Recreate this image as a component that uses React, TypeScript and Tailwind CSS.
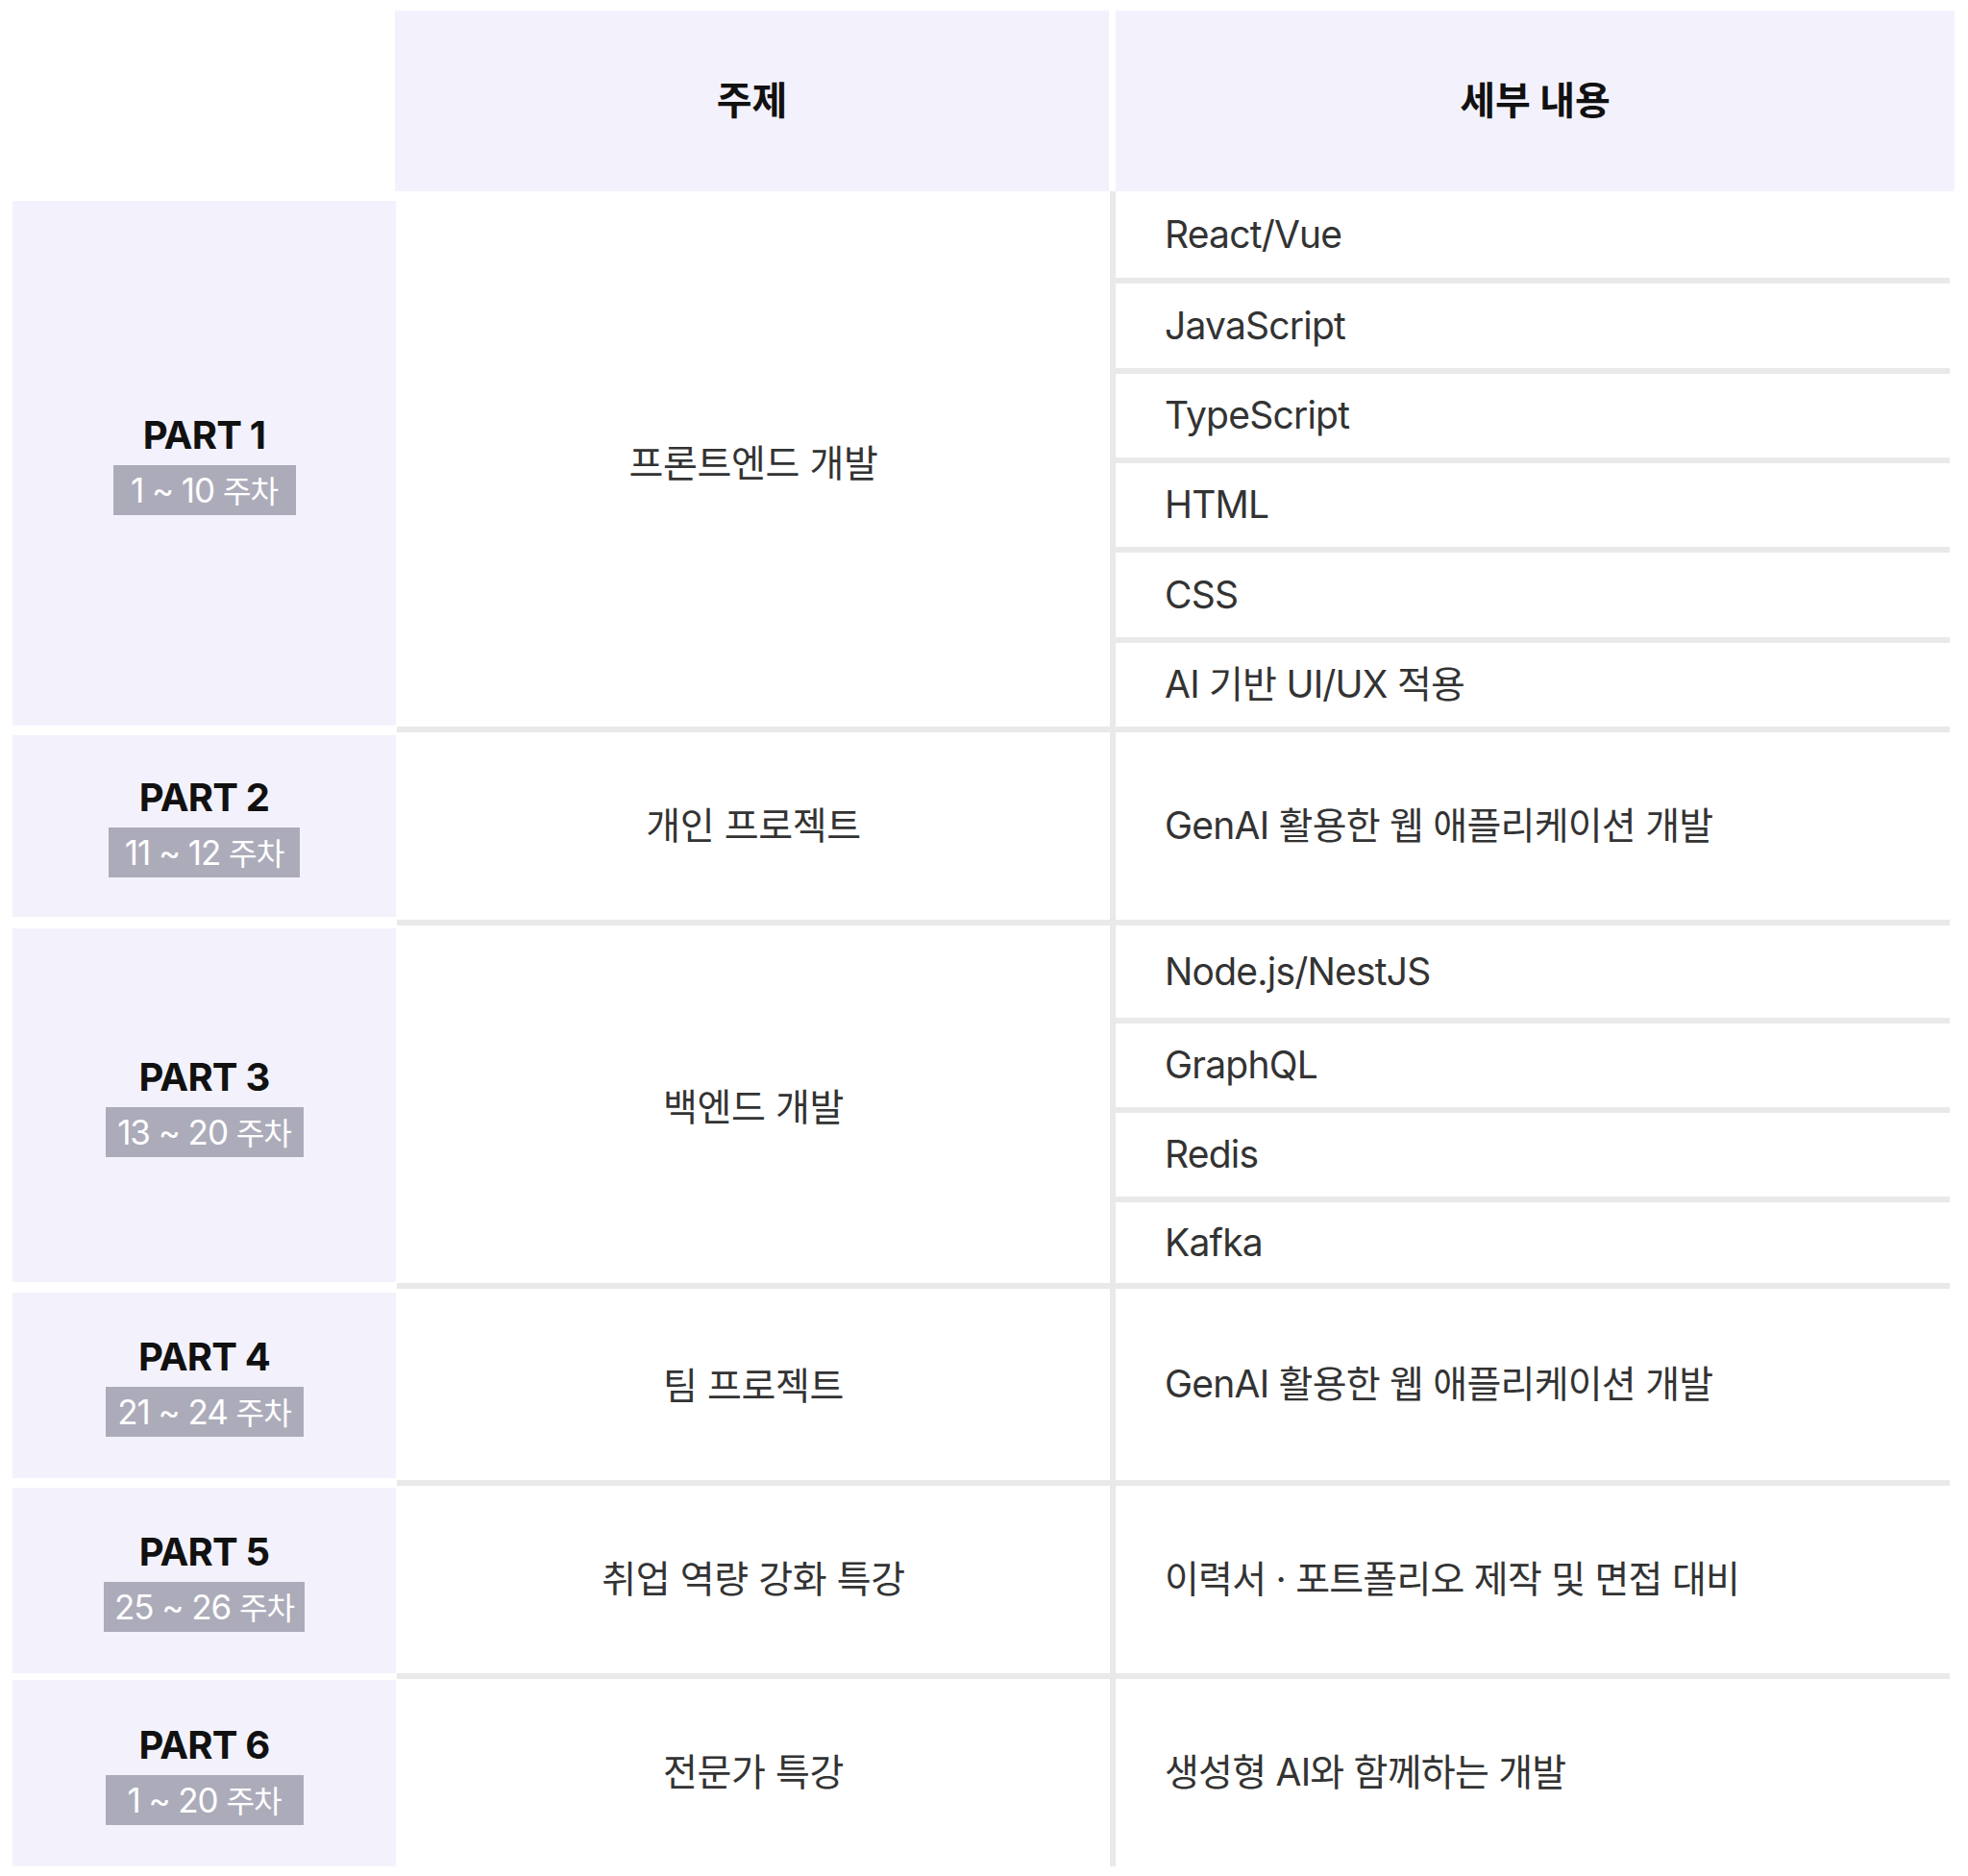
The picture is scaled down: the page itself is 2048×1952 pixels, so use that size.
import React from "react";

const HANGUL = /([\uAC00-\uD7AF\u3130-\u318F]+(?:\s+[\uAC00-\uD7AF\u3130-\u318F]+)*)/;

function Txt({ s, scaled }: { s: string; scaled?: boolean }) {
  const parts = s.split(HANGUL).filter((p) => p.length > 0);
  return (
    <span>
      {parts.map((p, i) =>
        scaled && /[\uAC00-\uD7AF]/.test(p) ? (
          <span key={i} className="text-[0.92em]">
            {p}
          </span>
        ) : (
          <span key={i}>{p}</span>
        )
      )}
    </span>
  );
}

type Row = {
  part: string;
  weeks: string;
  badgeW: number;
  topic: string;
  items: string[];
  heights: number[];
  cellPad: string;
  topicPad: string;
};

const rows: Row[] = [
  {
    part: "PART 1",
    weeks: "1 ~ 10 주차",
    badgeW: 190,
    topic: "프론트엔드 개발",
    items: ["React/Vue", "JavaScript", "TypeScript", "HTML", "CSS", "AI 기반 UI/UX 적용"],
    heights: [90, 88, 87, 87, 88, 87],
    cellPad: "pt-[10px] pb-[1px]",
    topicPad: "pt-[10px]",
  },
  {
    part: "PART 2",
    weeks: "11 ~ 12 주차",
    badgeW: 199,
    topic: "개인 프로젝트",
    items: ["GenAI 활용한 웹 애플리케이션 개발"],
    heights: [195],
    cellPad: "pt-[3px] pb-[3px]",
    topicPad: "pt-[0px]",
  },
  {
    part: "PART 3",
    weeks: "13 ~ 20 주차",
    badgeW: 206,
    topic: "백엔드 개발",
    items: ["Node.js/NestJS", "GraphQL", "Redis", "Kafka"],
    heights: [96, 87, 87, 84],
    cellPad: "pt-[3px] pb-[1px]",
    topicPad: "pt-[6px]",
  },
  {
    part: "PART 4",
    weeks: "21 ~ 24 주차",
    badgeW: 206,
    topic: "팀 프로젝트",
    items: ["GenAI 활용한 웹 애플리케이션 개발"],
    heights: [199],
    cellPad: "pt-[4px] pb-[2px]",
    topicPad: "pt-[3px]",
  },
  {
    part: "PART 5",
    weeks: "25 ~ 26 주차",
    badgeW: 209,
    topic: "취업 역량 강화 특강",
    items: ["이력서 · 포트폴리오 제작 및 면접 대비"],
    heights: [195],
    cellPad: "pt-[2px] pb-[0px]",
    topicPad: "pt-[0px]",
  },
  {
    part: "PART 6",
    weeks: "1 ~ 20 주차",
    badgeW: 206,
    topic: "전문가 특강",
    items: ["생성형 AI와 함께하는 개발"],
    heights: [195],
    cellPad: "pt-[1px] pb-[0px]",
    topicPad: "pt-[0px]",
  },
];

function BodyRow({ row }: { row: Row }) {
  return (
    <div className="flex">
      <div className={`w-[400px] flex flex-col ${row.cellPad}`}>
        <div className="flex-1 w-[399px] bg-[#f3f2fc] flex flex-col items-center justify-center">
          <div className="text-[40px] font-bold text-[#111] leading-[48px] tracking-[-0.02em]">
            {row.part}
          </div>
          <div
            className="mt-[7px] bg-[#acabba] text-white text-[35px] leading-[52px] h-[52px] text-center whitespace-nowrap tracking-[-0.03em]"
            style={{ width: row.badgeW }}
          >
            <Txt s={row.weeks} scaled />
          </div>
        </div>
      </div>
      <div
        className={`w-[742px] flex items-center justify-center text-[39px] text-[#333] tracking-[-0.01em] ${row.topicPad}`}
      >
        <Txt s={row.topic} />
      </div>
      <div className="w-[6px] bg-[#e9e9e9]" />
      <div className="w-[868px] flex flex-col">
        {row.items.map((it, i) => (
          <React.Fragment key={i}>
            {i > 0 && <div className="h-[6px] bg-[#e9e9e9]" />}
            <div
              className="flex items-center pl-[51px] text-[39px] text-[#333] tracking-[-0.02em]"
              style={{ height: row.heights[i] }}
            >
              <Txt s={it} />
            </div>
          </React.Fragment>
        ))}
      </div>
    </div>
  );
}

function Separator() {
  return (
    <div className="flex h-[6px]">
      <div className="w-[400px]" />
      <div className="w-[1616px] bg-[#e9e9e9]" />
    </div>
  );
}

export default function App() {
  return (
    <div className="w-[2048px] h-[1952px] bg-white pt-[11px] pl-[13px] font-['Inter','Noto_Sans_CJK_KR',sans-serif]">
      <div className="flex h-[188px]">
        <div className="w-[398px]" />
        <div className="w-[743px] bg-[#f3f2fc] flex items-center justify-center text-[40px] font-bold text-[#111]">
          <Txt s="주제" />
        </div>
        <div className="w-[7px]" />
        <div className="w-[873px] bg-[#f3f2fc] flex items-center justify-center text-[40px] font-bold text-[#111]">
          <Txt s="세부 내용" />
        </div>
      </div>
      {rows.map((r, i) => (
        <React.Fragment key={i}>
          {i > 0 && <Separator />}
          <BodyRow row={r} />
        </React.Fragment>
      ))}
    </div>
  );
}
